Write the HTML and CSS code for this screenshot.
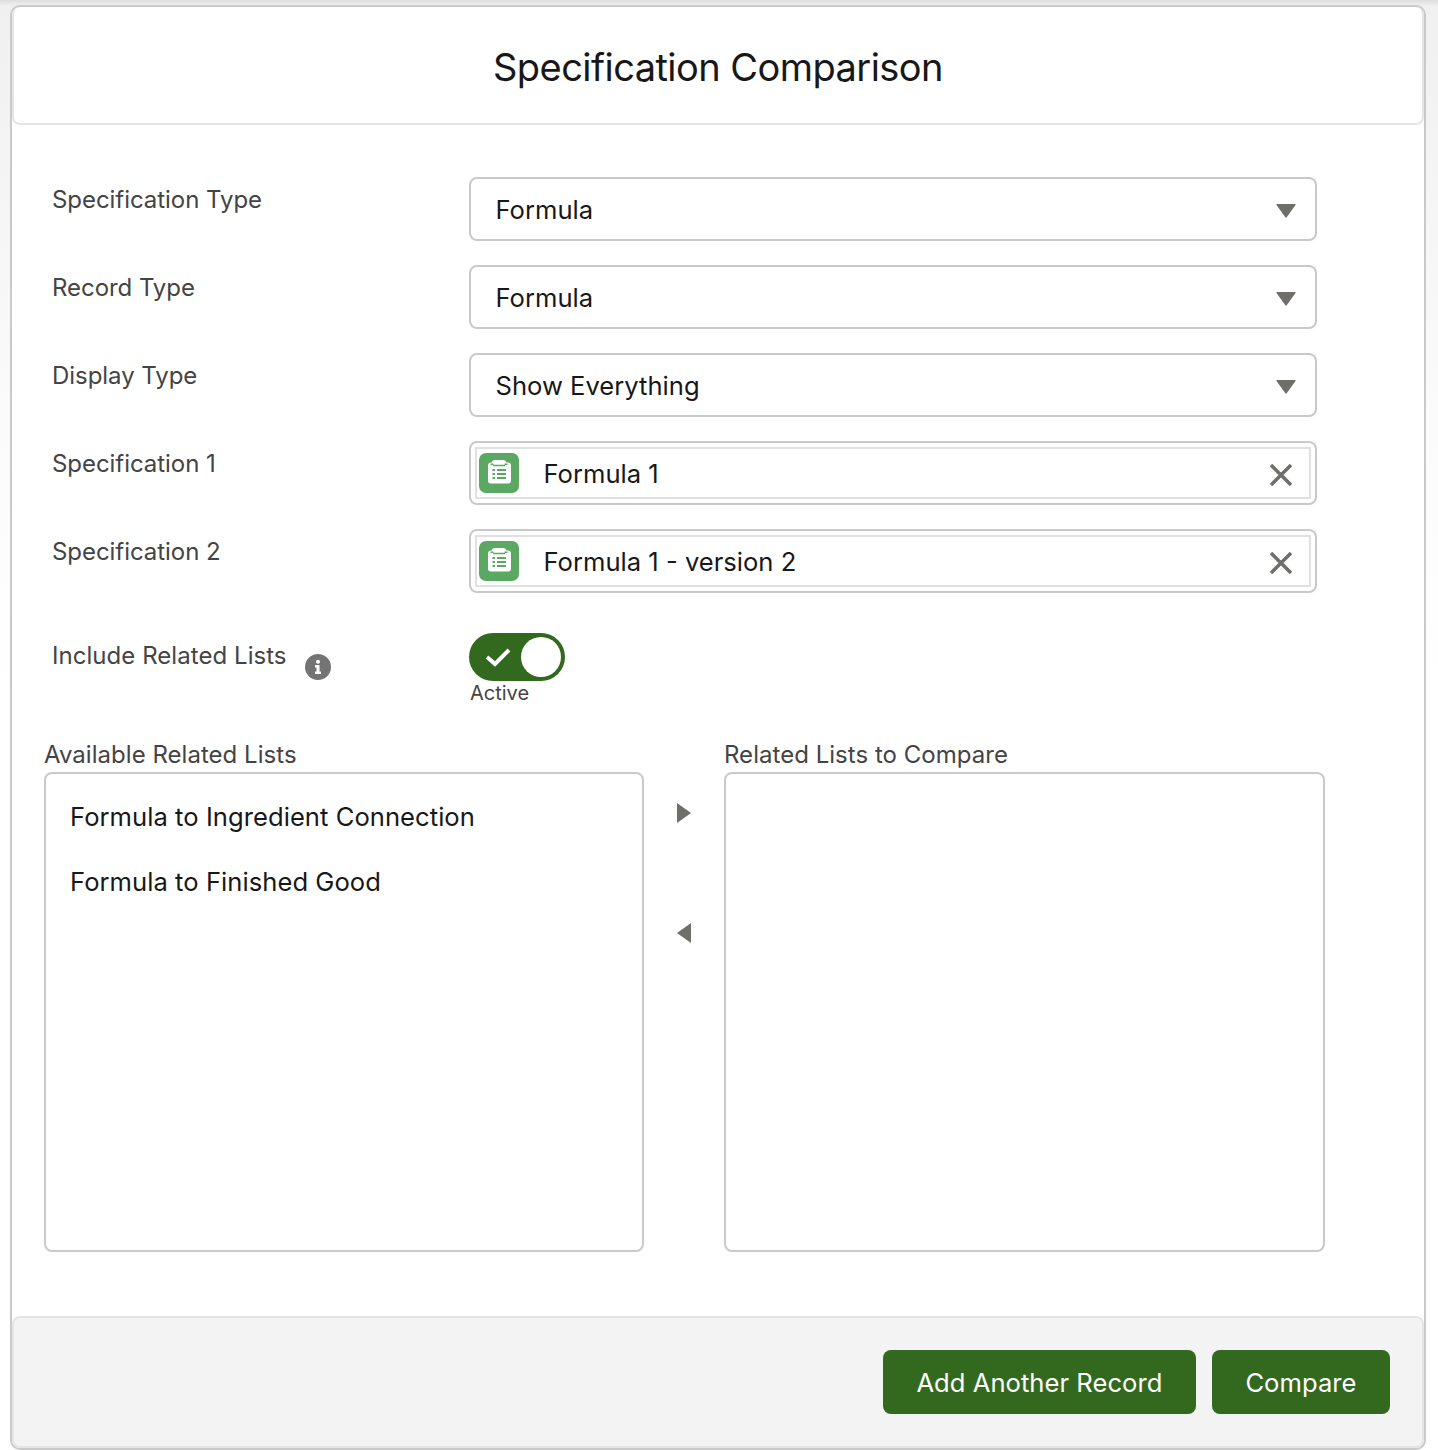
FILE: index.html
```html
<!DOCTYPE html>
<html lang="en">
<head>
<meta charset="utf-8">
<title>Specification Comparison</title>
<link rel="stylesheet" href="styles.css">
</head>
<body>
<main class="card">
  <header class="card-header"><h1 class="title">Specification Comparison</h1></header>
  <section class="form">
    <div class="row">
      <div class="label">Specification Type</div>
      <div class="select"><span>Formula</span><svg class="caret" viewBox="0 0 20 14"><path d="M1 0H19Q20 0 19.500 1L10.500 13.500Q10 14 9.500 13.500L.5 1Q0 0 1 0Z"/></svg></div>
    </div>
    <div class="row">
      <div class="label">Record Type</div>
      <div class="select"><span>Formula</span><svg class="caret" viewBox="0 0 20 14"><path d="M1 0H19Q20 0 19.500 1L10.500 13.500Q10 14 9.500 13.500L.5 1Q0 0 1 0Z"/></svg></div>
    </div>
    <div class="row">
      <div class="label">Display Type</div>
      <div class="select"><span>Show Everything</span><svg class="caret" viewBox="0 0 20 14"><path d="M1 0H19Q20 0 19.500 1L10.500 13.500Q10 14 9.500 13.500L.5 1Q0 0 1 0Z"/></svg></div>
    </div>
    <div class="row">
      <div class="label">Specification 1</div>
      <div class="lookup"><div class="lookup-inner">
        <svg class="record-icon" viewBox="0 0 40 40"><rect width="40" height="40" rx="7" fill="#5aa862"/><path fill="#fff" d="M15.500 7h9a3 3 0 0 1 2.800 2.500h1.700a3 3 0 0 1 3 3V27.500a3 3 0 0 1-3 3H12a3 3 0 0 1-3-3V12.500a3 3 0 0 1 3-3h.7A3 3 0 0 1 15.500 7z"/><path stroke="#5aa862" stroke-width="1.500" fill="none" d="M11.500 11.300h3M25.500 11.300h3M14 12.500h12"/><path stroke="#5aa862" stroke-width="2" d="M13.500 17h2.500M18 17h9M13.500 21h2.500M18 21h9M13.500 25h2.500M18 25h9"/></svg>
        <span class="lookup-text">Formula 1</span>
        <svg class="clear" viewBox="0 0 24 24"><path d="M2 2L22 22M22 2L2 22"/></svg>
      </div></div>
    </div>
    <div class="row">
      <div class="label">Specification 2</div>
      <div class="lookup"><div class="lookup-inner">
        <svg class="record-icon" viewBox="0 0 40 40"><rect width="40" height="40" rx="7" fill="#5aa862"/><path fill="#fff" d="M15.500 7h9a3 3 0 0 1 2.800 2.500h1.700a3 3 0 0 1 3 3V27.500a3 3 0 0 1-3 3H12a3 3 0 0 1-3-3V12.500a3 3 0 0 1 3-3h.7A3 3 0 0 1 15.500 7z"/><path stroke="#5aa862" stroke-width="1.500" fill="none" d="M11.500 11.300h3M25.500 11.300h3M14 12.500h12"/><path stroke="#5aa862" stroke-width="2" d="M13.500 17h2.500M18 17h9M13.500 21h2.500M18 21h9M13.500 25h2.500M18 25h9"/></svg>
        <span class="lookup-text">Formula 1 - version 2</span>
        <svg class="clear" viewBox="0 0 24 24"><path d="M2 2L22 22M22 2L2 22"/></svg>
      </div></div>
    </div>
    <div class="row toggle-row">
      <div class="label toggle-label">Include Related Lists
        <svg class="info" viewBox="0 0 26 26"><circle cx="13" cy="13" r="13" fill="#747474"/><circle cx="13" cy="7.800" r="2" fill="#fff"/><path fill="#fff" d="M10 11h4.500v6.500H16V20h-6v-2.500h1.500v-4H10z"/></svg>
      </div>
      <div class="toggle-col">
        <div class="toggle">
          <svg class="check" viewBox="0 0 26 20"><path d="M2 10l8 7L24 3"/></svg>
          <span class="knob"></span>
        </div>
        <div class="toggle-state">Active</div>
      </div>
    </div>
    <div class="dual">
      <div class="list-col">
        <div class="list-title">Available Related Lists</div>
        <div class="listbox">
          <div class="list-item">Formula to Ingredient Connection</div>
          <div class="list-item">Formula to Finished Good</div>
        </div>
      </div>
      <div class="move">
        <svg class="arrow" viewBox="0 0 14 20"><path d="M0 0L14 10L0 20Z"/></svg>
        <svg class="arrow" viewBox="0 0 14 20"><path d="M14 0L0 10L14 20Z"/></svg>
      </div>
      <div class="list-col list-col-wide">
        <div class="list-title">Related Lists to Compare</div>
        <div class="listbox"></div>
      </div>
    </div>
  </section>
  <footer class="card-footer">
    <div class="btn">Add Another Record</div>
    <div class="btn">Compare</div>
  </footer>
</main>
</body>
</html>
```

FILE: styles.css
```css
* { box-sizing: border-box; }
html, body { margin: 0; height: 100%; }
body {
  background: linear-gradient(#dedede, #f0f0f0 6px, #fbfbfb 420px, #fff 700px);
  font-family: Inter, "Liberation Sans", sans-serif;
  color: #181818;
  padding: 5px 12px 0 10px;
  overflow: hidden;
}
.card {
  height: 1445px;
  background: #fff;
  border: 2px solid #c9c9c9;
  border-radius: 10px;
  display: flex;
  flex-direction: column;
}
.card-header {
  height: 118px;
  border: 2px solid #e5e5e5;
  border-top: 0;
  border-radius: 8px;
  display: flex;
  align-items: center;
  justify-content: center;
}
.title {
  margin: 0;
  font-size: 38px;
  font-weight: 400;
  letter-spacing: -0.55px;
  color: #181818;
  padding-top: 4px;
}
.form {
  flex: 1;
  padding: 52px 0 0 32px;
}
.row {
  display: flex;
  height: 64px;
  margin-bottom: 24px;
}
.label {
  width: 425px;
  padding: 8px 0 0 8px;
  font-size: 24px;
  line-height: 30px;
  color: #444;
  letter-spacing: -0.05px;
}
.select, .lookup {
  width: 848px;
  height: 64px;
  border: 2px solid #c9c9c9;
  border-radius: 8px;
  font-size: 25.6px;
  color: #181818;
}
.select {
  display: flex;
  align-items: center;
  justify-content: space-between;
  padding: 0 19px 0 24.500px;
}
.caret { width: 20px; height: 14px; fill: #706e6b; margin-top: 3px; }
.lookup { padding: 4px; }
.lookup-inner {
  height: 52px;
  border: 2px solid #e0e0e0;
  display: flex;
  align-items: center;
  padding: 0 16px 0 2px;
}
.record-icon { width: 40px; height: 40px; flex: none; }
.lookup-text { margin-left: 24.500px; flex: 1; }
.clear { width: 24px; height: 24px; fill: none; stroke: #706e6b; stroke-width: 3.5; margin-top: 4px; }
.toggle-row {
  height: 72px;
  margin: 40px 0 0;
}
.toggle-label { position: relative; padding-top: 8px; letter-spacing: 0.05px; }
.info { position: absolute; left: 261px; top: 21px; width: 26px; height: 26px; }
.toggle-col { display: flex; flex-direction: column; }
.toggle {
  width: 96px;
  height: 48px;
  border-radius: 24px;
  background: #32691f;
  display: flex;
  align-items: center;
  justify-content: space-between;
  padding: 0 4px 0 16px;
}
.check { width: 26px; height: 20px; fill: none; stroke: #fff; stroke-width: 4; }
.knob { width: 40px; height: 40px; border-radius: 50%; background: #fff; }
.toggle-state {
  font-size: 20px;
  line-height: 24px;
  color: #444;
  padding-left: 1px;
}
.dual {
  display: flex;
  padding-top: 35px;
}
.list-col { width: 600px; }
.list-col-wide { width: 601px; }
.list-title {
  font-size: 24px;
  line-height: 30px;
  color: #444;
  letter-spacing: 0.03px;
  height: 32px;
}
.listbox {
  height: 480px;
  border: 2px solid #c9c9c9;
  border-radius: 8px;
  padding: 10px 24px;
}
.list-item {
  font-size: 25.6px;
  line-height: 65px;
  color: #181818;
  height: 65px;
  letter-spacing: 0.04px;
}
.move {
  width: 80px;
  padding: 63px 0 0 33px;
  display: flex;
  flex-direction: column;
  gap: 100px;
}
.arrow { width: 14px; height: 20px; fill: #706e6b; }
.card-footer {
  height: 132px;
  background: #f3f3f3;
  border: 2px solid #e5e5e5;
  border-radius: 8px;
  display: flex;
  justify-content: flex-end;
  align-items: center;
  gap: 16px;
  padding-right: 32px;
}
.btn {
  height: 64px;
  padding: 2px 33.500px 0;
  background: #32691f;
  color: #fff;
  border-radius: 8px;
  font-size: 25.6px;
  line-height: 62px;
  letter-spacing: 0.03px;
}
```
